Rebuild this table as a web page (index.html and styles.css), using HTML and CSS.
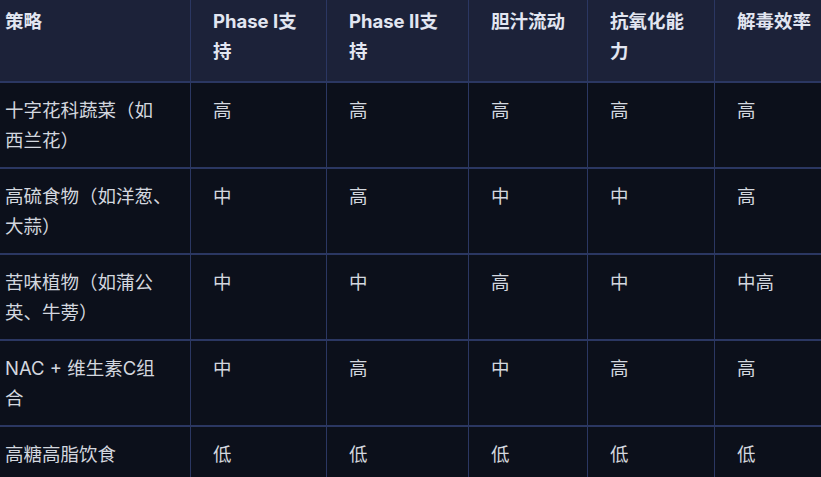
FILE: index.html
```html
<!DOCTYPE html>
<html lang="zh">
<head>
<meta charset="utf-8">
<title>解毒策略对比</title>
<link rel="stylesheet" href="styles.css">
</head>
<body>
<div class="table-wrap">
<table class="cmp">
<colgroup>
<col class="c1"><col class="c2"><col class="c3"><col class="c4"><col class="c5"><col class="c6">
</colgroup>
<thead>
<tr><th>策略</th><th>Phase I支持</th><th>Phase II支持</th><th>胆汁流动</th><th>抗氧化能力</th><th>解毒效率</th></tr>
</thead>
<tbody>
<tr><td>十字花科蔬菜（如西兰花）</td><td>高</td><td>高</td><td>高</td><td>高</td><td>高</td></tr>
<tr><td>高硫食物（如洋葱<span class="trim">、</span>大蒜）</td><td>中</td><td>高</td><td>中</td><td>中</td><td>高</td></tr>
<tr><td>苦味植物（如蒲公英、牛蒡）</td><td>中</td><td>中</td><td>高</td><td>中</td><td>中高</td></tr>
<tr><td>NAC + 维生素C组合</td><td>中</td><td>高</td><td>中</td><td>高</td><td>高</td></tr>
<tr><td>高糖高脂饮食</td><td>低</td><td>低</td><td>低</td><td>低</td><td>低</td></tr>
</tbody>
</table>
</div>
</body>
</html>
```

FILE: styles.css
```css
html, body {
  margin: 0;
  padding: 0;
  background: #0c101b;
  overflow: hidden;
}
.table-wrap {
  width: 821px;
  height: 477px;
  overflow: hidden;
}
.cmp {
  margin-left: -18px;
  border-collapse: collapse;
  table-layout: fixed;
  width: 861px;
  font-family: Inter, "Noto Sans CJK SC", sans-serif;
  font-size: 18.5px;
  line-height: 30px;
  color: #d3d7df;
}
.c1 { width: 208px; }
.c2 { width: 136px; }
.c3 { width: 142px; }
.c4 { width: 119px; }
.c5 { width: 127px; }
.c6 { width: 129px; }
.cmp th,
.cmp td {
  text-align: left;
  vertical-align: top;
  padding: 12px 22px;
  border-left: 1px solid #2b3762;
  border-right: 1px solid #2b3762;
  border-bottom: 2px solid #2b3762;
}
.cmp th {
  background: #1c2239;
  color: #e2e6f1;
  font-weight: 700;
  padding-top: 6px;
  padding-bottom: 15px;
}
.cmp td {
  background: #0c101b;
  font-weight: 400;
}
.trim {
  font-feature-settings: "halt";
}
```
